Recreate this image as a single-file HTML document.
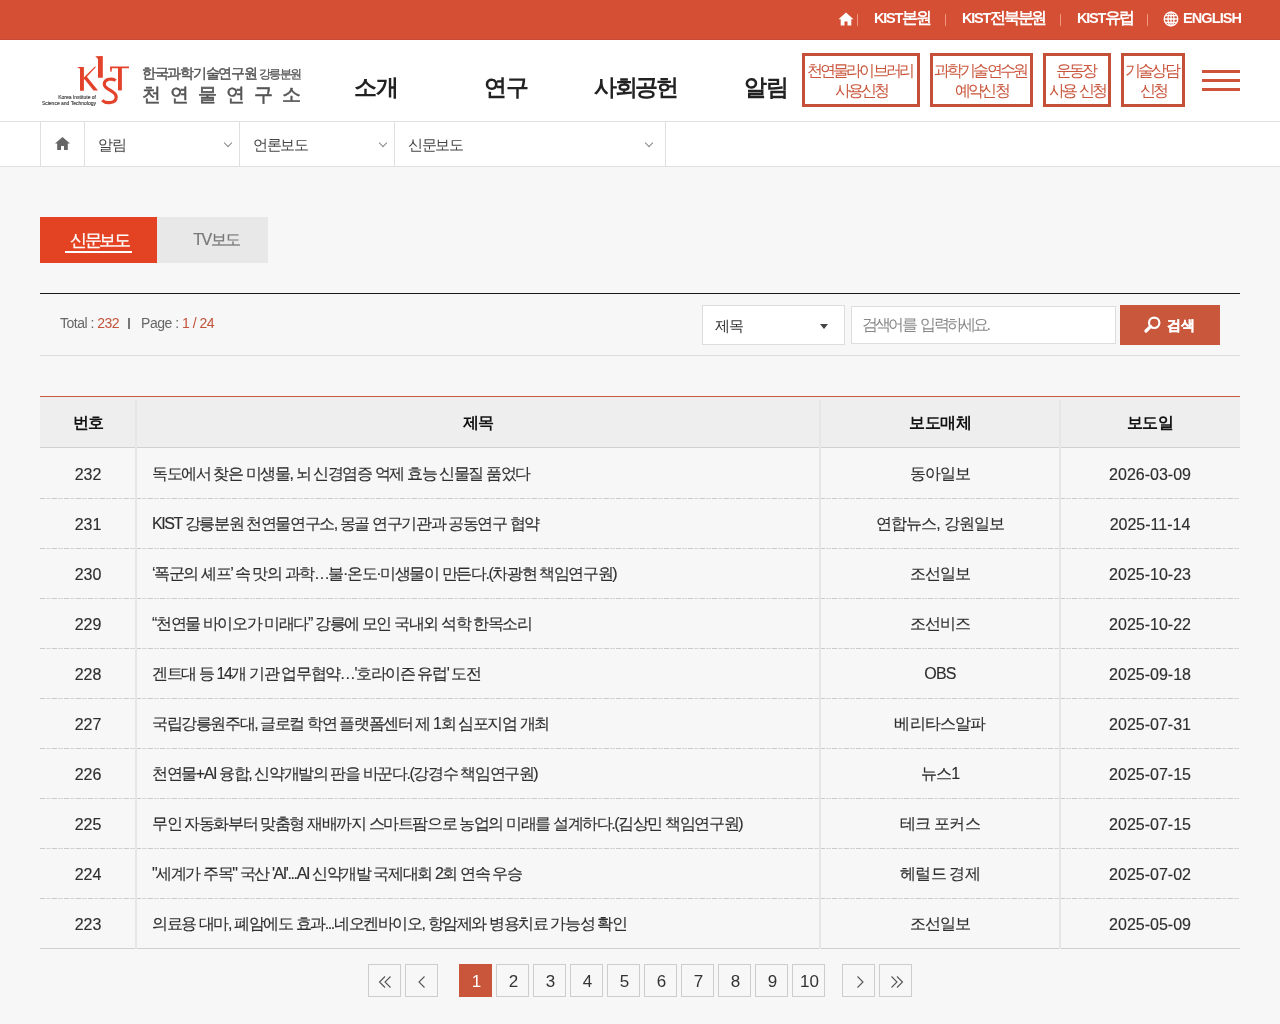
<!DOCTYPE html>
<html lang="ko">
<head>
<meta charset="utf-8">
<title>신문보도</title>
<style>
*{margin:0;padding:0;box-sizing:border-box}
html,body{width:1280px;height:1024px;overflow:hidden}
body{position:relative;background:#f7f7f7;font-family:"Liberation Sans",sans-serif;color:#333}
.abs{position:absolute}
#wrap{position:absolute;left:0;top:0;width:1280px;height:1024px;will-change:transform}
#topbar{left:0;top:0;width:1280px;height:40px;background:#d54f34;border-bottom:1px solid #c44c36}
#topbar .t{position:absolute;top:9px;font-size:16px;font-weight:bold;color:#fff;line-height:18px;white-space:nowrap;letter-spacing:-2.3px}
#topbar .t .en{font-size:14.5px;letter-spacing:-1.2px;margin-right:0}
#topbar .sep{position:absolute;top:14px;width:1px;height:12px;background:#f39580}
#header{left:0;top:40px;width:1280px;height:82px;background:#fff;border-bottom:1px solid #e0e0e0}
.gnb{position:absolute;top:33px;font-size:23px;font-weight:bold;color:#222;line-height:28px;white-space:nowrap;letter-spacing:-1px}
.qbtn{position:absolute;top:13px;height:54px;border:3px solid #c5503a;color:#c9553b;font-size:16px;line-height:20px;text-align:center;padding-top:5px;white-space:nowrap;letter-spacing:-2.9px;text-indent:-3px}
.ham{position:absolute;left:1202px;width:38px;height:3px;background:#cf5338}
#bread{left:0;top:122px;width:1280px;height:45px;background:#fff;border-bottom:1px solid #e0e0e0}
.bc{position:absolute;top:0;height:44px;border-left:1px solid #e0e0e0;font-size:15px;color:#444;line-height:44px;letter-spacing:-1.5px}
.bc span{position:absolute;left:13px;top:1px}
.chev{position:absolute;top:18px;width:6px;height:6px;border-right:1px solid #888;border-bottom:1px solid #888;transform:rotate(45deg)}
.tab{position:absolute;top:217px;height:46px;font-size:16px;text-align:center;line-height:46px}
#line1{left:40px;top:293px;width:1200px;height:1px;background:#1a1a1a}
#line2{left:40px;top:355px;width:1200px;height:1px;background:#ddd}
#info{left:60px;top:314px;font-size:14px;color:#666;line-height:18px;white-space:nowrap;letter-spacing:-0.5px}
#info b{font-weight:normal;color:#c0533a}
#sel{left:702px;top:305px;width:143px;height:40px;background:#fff;border:1px solid #ddd}
#inp{left:851px;top:306px;width:265px;height:38px;background:#fff;border:1px solid #ddd}
#sbtn{left:1120px;top:305px;width:100px;height:40px;background:#c9573b}
#tbl{left:40px;top:396px;width:1200px;height:553px;border-top:1px solid #c75a3e}
.th{position:absolute;top:0;height:51px;background:#eeeeee;border-bottom:1px solid #d0d0d0}
.vl{position:absolute;width:2px;background:#e6e6e6}
.hd{position:absolute;top:0;height:51px;line-height:51px;text-align:center;font-size:16px;font-weight:bold;color:#111;letter-spacing:-0.5px}
.row{position:absolute;left:0;width:1200px;height:50px;font-size:16px;color:#2e2e2e;-webkit-text-stroke:0.15px #2e2e2e;line-height:49px;white-space:nowrap}
.row:after{content:'';position:absolute;left:0;top:49px;width:1200px;height:1px;background:repeating-linear-gradient(90deg,#c9c9c9 0,#c9c9c9 5px,#f7f7f7 5px,#f7f7f7 6px,#d6d6d6 6px,#d6d6d6 11px,#f7f7f7 11px,#f7f7f7 12px)}
.row.last:after{background:#d0d0d0}
.row div{position:absolute;top:1px}
.row .c2,.row .c3{top:0}
.c1{left:0;width:96px;text-align:center}
.c2{left:112px;letter-spacing:-1.4px}
.c3{left:780px;width:240px;text-align:center;letter-spacing:-0.8px}
.c4{left:1020px;width:180px;text-align:center}
.pg{position:absolute;top:964px;width:33px;height:33px;border:1px solid #cdcdcd;font-size:17px;color:#333;text-align:center;line-height:33px;text-indent:2px}
</style>
</head>
<body>
<div id="wrap">
<div id="topbar" class="abs">
  <svg class="abs" style="left:837.5px;top:11.5px" width="16" height="14" viewBox="0 0 16 14"><path d="M8 0.5L0.5 7.2h2.2V13.5h3.8V9.5h3V13.5h3.8V7.2h2.2z" fill="#fff"/></svg>
  <div class="sep" style="left:857px"></div>
  <div class="t" style="left:874px"><span class="en">KIST</span>본원</div>
  <div class="sep" style="left:945px"></div>
  <div class="t" style="left:962px"><span class="en">KIST</span>전북분원</div>
  <div class="sep" style="left:1060px"></div>
  <div class="t" style="left:1077px"><span class="en">KIST</span>유럽</div>
  <div class="sep" style="left:1147px"></div>
  <svg class="abs" style="left:1163px;top:11px" width="16" height="16" viewBox="0 0 16 16"><g fill="none" stroke="#fff" stroke-width="1.3"><circle cx="8" cy="8" r="6.8"/><ellipse cx="8" cy="8" rx="3" ry="6.8"/><path d="M1.2 8h13.6M2.2 4.6h11.6M2.2 11.4h11.6M8 1.2v13.6"/></g></svg>
  <div class="t" style="left:1183px"><span class="en" style="letter-spacing:-0.9px">ENGLISH</span></div>
</div>

<div id="header" class="abs">
  <svg class="abs" style="left:0;top:0" width="140" height="82" viewBox="0 0 140 82"><g transform="translate(76,14)" fill="#e4432b">
    <path d="M1 13L7.9 13V36.75H4V14.8Z"/>
    <path d="M7.9 23.5L18.6 12.7L20.2 12.7L7.9 26Z"/>
    <path d="M8 24.5L10.5 22.2L22 36.6H17.5Z"/>
    <path d="M19.3 2.3L26.8 2V23.8H22V5Z"/>
    <path d="M34 12.5H53V14.2H36L35.5 17.7H34.3Z"/>
    <path d="M42 14H45.9V36.4H42Z"/>
    <path d="M39.6 26.6C37 24.2 28.3 24.3 28.3 30.3C28.3 36 40.2 36.5 40.2 43C40.2 49.6 30.2 50 26.2 46.4" fill="none" stroke="#e4432b" stroke-width="3.2"/>
  </g></svg>
  <div class="abs" style="left:40px;top:55px;width:56px;font-size:5px;line-height:5.5px;color:#444;-webkit-text-stroke:0.15px #444;text-align:right;white-space:nowrap">Korea Institute of<br>Science and Technology</div>
  <div class="abs" style="left:142px;top:25px;font-size:14px;color:#555;line-height:16px;white-space:nowrap;letter-spacing:-1.3px;-webkit-text-stroke:0.45px #555">한국과학기술연구원 <span style="font-size:12px;letter-spacing:-1.5px;-webkit-text-stroke:0.3px #555">강릉분원</span></div>
  <div class="abs" style="left:142px;top:44px;font-size:19px;color:#555;line-height:22px;white-space:nowrap;letter-spacing:9px;-webkit-text-stroke:0.6px #555">천연물연구소</div>
  <div class="gnb" style="left:354px">소개</div>
  <div class="gnb" style="left:484px">연구</div>
  <div class="gnb" style="left:594px;letter-spacing:-2.3px">사회공헌</div>
  <div class="gnb" style="left:744px">알림</div>
  <div class="qbtn" style="left:802px;width:118px">천연물라이브러리<br>사용신청</div>
  <div class="qbtn" style="left:930px;width:103px">과학기술연수원<br>예약신청</div>
  <div class="qbtn" style="left:1043px;width:68px;word-spacing:3px">운동장<br>사용 신청</div>
  <div class="qbtn" style="left:1121px;width:64px">기술상담<br>신청</div>
  <div class="ham" style="top:30px"></div>
  <div class="ham" style="top:39px"></div>
  <div class="ham" style="top:48px"></div>
</div>

<div id="bread" class="abs">
  <div class="bc" style="left:40px;width:44px">
    <svg class="abs" style="left:14px;top:15px" width="15" height="13" viewBox="0 0 15 13"><path d="M7.5 0L0 6.6h2.2V13h3.8V9h3v4h3.8V6.6H15z" fill="#666"/></svg>
  </div>
  <div class="bc" style="left:84px;width:155px"><span>알림</span><i class="chev" style="left:140px"></i></div>
  <div class="bc" style="left:239px;width:155px"><span>언론보도</span><i class="chev" style="left:140px"></i></div>
  <div class="bc" style="left:394px;width:272px;border-right:1px solid #e0e0e0"><span>신문보도</span><i class="chev" style="left:251px"></i></div>
</div>

<div class="tab" style="left:40px;width:117px;background:#e44323;color:#fff"><span style="position:relative;top:1px;border-bottom:2px solid #fff;padding:0 3px 1px 5px;letter-spacing:-2.2px;font-size:17px;-webkit-text-stroke:0.3px #fff">신문보도</span></div>
<div class="tab" style="left:157px;width:111px;background:#e8e8e8;color:#777"><span style="letter-spacing:-1.5px;padding-left:8px;-webkit-text-stroke:0.2px #777">TV보도</span></div>

<div id="line1" class="abs"></div>
<div id="info" class="abs">Total : <b>232</b><i style="display:inline-block;width:2px;height:11px;background:#777;margin:0 11px 0 9px;vertical-align:-1px"></i>Page : <b>1 / 24</b></div>
<div id="sel" class="abs"><span class="abs" style="left:12px;top:10px;font-size:15px;line-height:20px;color:#333;letter-spacing:-1.5px">제목</span><svg class="abs" style="left:117px;top:18px" width="8" height="5" viewBox="0 0 8 5"><path d="M0 0h8L4 5z" fill="#444"/></svg></div>
<div id="inp" class="abs"><span class="abs" style="left:10px;top:8px;font-size:16px;line-height:20px;color:#888;letter-spacing:-2.8px;word-spacing:4px">검색어를 입력하세요.</span></div>
<div id="sbtn" class="abs"><svg class="abs" style="left:24px;top:11px" width="17" height="17" viewBox="0 0 17 17"><circle cx="10.2" cy="6.8" r="5.2" fill="none" stroke="#fff" stroke-width="2.2"/><path d="M6.6 10.4L2 15" stroke="#fff" stroke-width="3.2" stroke-linecap="round"/></svg><span class="abs" style="left:47px;top:10px;font-size:14px;font-weight:bold;line-height:20px;color:#fff;letter-spacing:-0.5px;-webkit-text-stroke:0.3px #fff">검색</span></div>
<div id="line2" class="abs"></div>

<div id="tbl" class="abs">
  <div class="th" style="left:0;width:1200px"></div>
  <div class="hd" style="left:0;width:96px">번호</div>
  <div class="hd" style="left:96px;width:684px">제목</div>
  <div class="hd" style="left:780px;width:240px">보도매체</div>
  <div class="hd" style="left:1020px;width:180px">보도일</div>
  <div class="row" style="top:52px"><div class="c1">232</div><div class="c2">독도에서 찾은 미생물, 뇌 신경염증 억제 효능 신물질 품었다</div><div class="c3">동아일보</div><div class="c4">2026-03-09</div></div>
  <div class="row" style="top:102px"><div class="c1">231</div><div class="c2">KIST 강릉분원 천연물연구소, 몽골 연구기관과 공동연구 협약</div><div class="c3">연합뉴스, 강원일보</div><div class="c4">2025-11-14</div></div>
  <div class="row" style="top:152px"><div class="c1">230</div><div class="c2">‘폭군의 셰프’ 속 맛의 과학…불·온도·미생물이 만든다.(차광현 책임연구원)</div><div class="c3">조선일보</div><div class="c4">2025-10-23</div></div>
  <div class="row" style="top:202px"><div class="c1">229</div><div class="c2">“천연물 바이오가 미래다” 강릉에 모인 국내외 석학 한목소리</div><div class="c3">조선비즈</div><div class="c4">2025-10-22</div></div>
  <div class="row" style="top:252px"><div class="c1">228</div><div class="c2">겐트대 등 14개 기관 업무협약…'호라이즌 유럽' 도전</div><div class="c3">OBS</div><div class="c4">2025-09-18</div></div>
  <div class="row" style="top:302px"><div class="c1">227</div><div class="c2">국립강릉원주대, 글로컬 학연 플랫폼센터 제 1회 심포지엄 개최</div><div class="c3">베리타스알파</div><div class="c4">2025-07-31</div></div>
  <div class="row" style="top:352px"><div class="c1">226</div><div class="c2">천연물+AI 융합, 신약개발의 판을 바꾼다.(강경수 책임연구원)</div><div class="c3">뉴스1</div><div class="c4">2025-07-15</div></div>
  <div class="row" style="top:402px"><div class="c1">225</div><div class="c2">무인 자동화부터 맞춤형 재배까지 스마트팜으로 농업의 미래를 설계하다.(김상민 책임연구원)</div><div class="c3">테크 포커스</div><div class="c4">2025-07-15</div></div>
  <div class="row" style="top:452px"><div class="c1">224</div><div class="c2">"세계가 주목" 국산 'AI'...AI 신약개발 국제대회 2회 연속 우승</div><div class="c3">헤럴드 경제</div><div class="c4">2025-07-02</div></div>
  <div class="row last" style="top:502px"><div class="c1">223</div><div class="c2">의료용 대마, 폐암에도 효과...네오켄바이오, 항암제와 병용치료 가능성 확인</div><div class="c3">조선일보</div><div class="c4">2025-05-09</div></div>
  <div class="vl" style="left:95px;top:3px;height:549px"></div>
  <div class="vl" style="left:779px;top:3px;height:549px"></div>
  <div class="vl" style="left:1019px;top:3px;height:549px"></div>
</div>

<div id="paging">
  <div class="pg" style="left:368px"><svg class="abs" style="left:9px;top:11px" width="14" height="12" viewBox="0 0 14 12"><path d="M7 0.5L1.5 6L7 11.5M12.5 0.5L7 6L12.5 11.5" fill="none" stroke="#555" stroke-width="1.1"/></svg></div>
  <div class="pg" style="left:405px"><svg class="abs" style="left:12px;top:11px" width="8" height="12" viewBox="0 0 8 12"><path d="M6.5 0.5L1 6L6.5 11.5" fill="none" stroke="#555" stroke-width="1.1"/></svg></div>
  <div class="pg" style="left:459px;background:#c9553a;border-color:#c9553a;color:#fff">1</div>
  <div class="pg" style="left:496px">2</div>
  <div class="pg" style="left:533px">3</div>
  <div class="pg" style="left:570px">4</div>
  <div class="pg" style="left:607px">5</div>
  <div class="pg" style="left:644px">6</div>
  <div class="pg" style="left:681px">7</div>
  <div class="pg" style="left:718px">8</div>
  <div class="pg" style="left:755px">9</div>
  <div class="pg" style="left:792px">10</div>
  <div class="pg" style="left:842px"><svg class="abs" style="left:13px;top:11px" width="8" height="12" viewBox="0 0 8 12"><path d="M1.5 0.5L7 6L1.5 11.5" fill="none" stroke="#555" stroke-width="1.1"/></svg></div>
  <div class="pg" style="left:879px"><svg class="abs" style="left:10px;top:11px" width="14" height="12" viewBox="0 0 14 12"><path d="M1.5 0.5L7 6L1.5 11.5M7 0.5L12.5 6L7 11.5" fill="none" stroke="#555" stroke-width="1.1"/></svg></div>
</div>
</div>
</body>
</html>
